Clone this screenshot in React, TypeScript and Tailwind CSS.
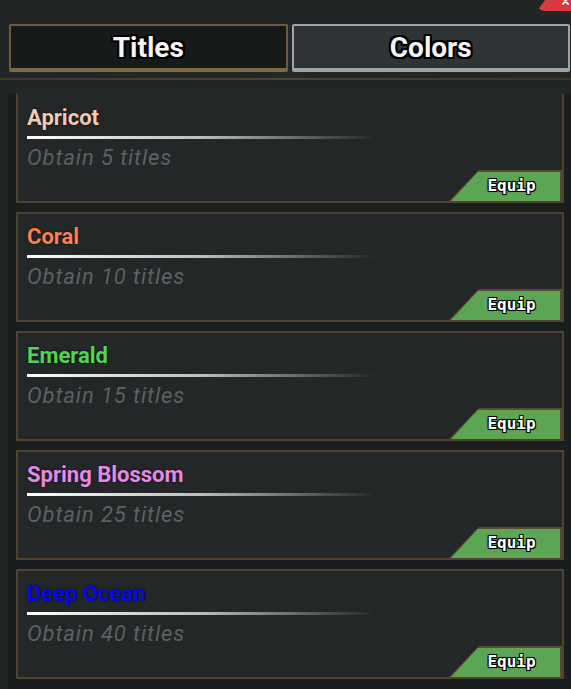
import React from 'react';

const colors = [
  { name: 'Apricot', color: '#f3c9b1', need: 5 },
  { name: 'Coral', color: '#ff7f50', need: 10 },
  { name: 'Emerald', color: '#52d454', need: 15 },
  { name: 'Spring Blossom', color: '#e58ae6', need: 25 },
  { name: 'Deep Ocean', color: '#0a0ae0', need: 40 },
];

function EquipButton() {
  return (
    <div className="self-end mt-auto w-[113px] h-[35px] bg-[#5a4a31] pt-[2px] pr-[2px] [clip-path:polygon(30px_0,100%_0,100%_100%,0_100%)]">
      <div className="w-full h-full bg-[#5ca554] flex items-center justify-center pl-[14px] [clip-path:polygon(29px_0,100%_0,100%_100%,2px_100%)]">
        <span className="font-['DejaVu_Sans_Mono',monospace] font-bold text-[16px] text-white leading-none [text-shadow:-1px_-1px_0_#000,1px_-1px_0_#000,-1px_1px_0_#000,1px_1px_0_#000,0_0_2px_#000]">
          Equip
        </span>
      </div>
    </div>
  );
}

function ColorCard({ name, color, need, first }: { name: string; color: string; need: number; first: boolean }) {
  return (
    <div
      className={
        'h-[110px] border-2 border-[#4f4330] bg-[#232728] flex flex-col pl-[9px] pt-[11px] ' +
        (first ? 'border-t-[#232728]' : '')
      }
    >
      <div
        className="text-[22px] font-bold leading-[24px] [text-shadow:0_0_2px_rgba(0,0,0,0.9)]"
        style={{ color }}
      >
        {name}
      </div>
      <div className="mt-[6px] h-[3px] w-[348px] bg-gradient-to-r from-white via-[#bdbdbd] to-transparent" />
      <div className="mt-[7px] text-[22px] italic leading-[24px] tracking-[0.9px] text-[#5c6162]">
        Obtain {need} titles
      </div>
      <EquipButton />
    </div>
  );
}

export default function App() {
  return (
    <div className="relative w-[571px] h-[689px] overflow-hidden bg-[#222627] font-['Roboto',sans-serif]">
      <div className="absolute top-0 right-0 w-[34px] h-[11px] bg-[#d93a40] rounded-bl-[8px] [clip-path:polygon(8px_0,100%_0,100%_100%,0_100%)]">
        <svg className="absolute right-[1px] top-0" width="8" height="6" viewBox="0 0 8 6">
          <path d="M1 -2 L6 4 M6 -2 L1 4" stroke="#fff" strokeWidth="1.8" strokeLinecap="round" />
        </svg>
      </div>

      <div className="flex gap-[4px] pl-[9px] pr-[1px] pt-[24px]">
        <div className="flex-1 h-[48px] bg-[#161a1b] border-2 border-b-4 border-[#6e5c3e] border-b-[#7d6848] rounded-[2px] flex items-center justify-center pt-[2px]">
          <span className="text-[28px] font-bold text-[#f4f4f4] [text-shadow:-2px_-2px_0_#000,2px_-2px_0_#000,-2px_2px_0_#000,2px_2px_0_#000,0_2px_0_#000,0_-2px_0_#000,2px_0_0_#000,-2px_0_0_#000]">
            Titles
          </span>
        </div>
        <div className="flex-1 h-[48px] bg-[#2f3537] border-2 border-b-4 border-[#9fa4a5] rounded-[2px] flex items-center justify-center pt-[2px]">
          <span className="text-[28px] font-bold text-[#f4f4f4] [text-shadow:-2px_-2px_0_#000,2px_-2px_0_#000,-2px_2px_0_#000,2px_2px_0_#000,0_2px_0_#000,0_-2px_0_#000,2px_0_0_#000,-2px_0_0_#000]">
            Colors
          </span>
        </div>
      </div>

      <div className="mt-[6px] h-[2px] bg-gradient-to-r from-[#3d372c] via-[#4d4536] to-[#3a3429]" />

      <div className="mt-[13px] ml-[8px] h-[600px] overflow-hidden bg-[#1a1e1f] pl-[8px] pr-[7px]">
        <div className="flex flex-col gap-[9px]">
          {colors.map((c, i) => (
            <ColorCard key={c.name} {...c} first={i === 0} />
          ))}
        </div>
      </div>
    </div>
  );
}
